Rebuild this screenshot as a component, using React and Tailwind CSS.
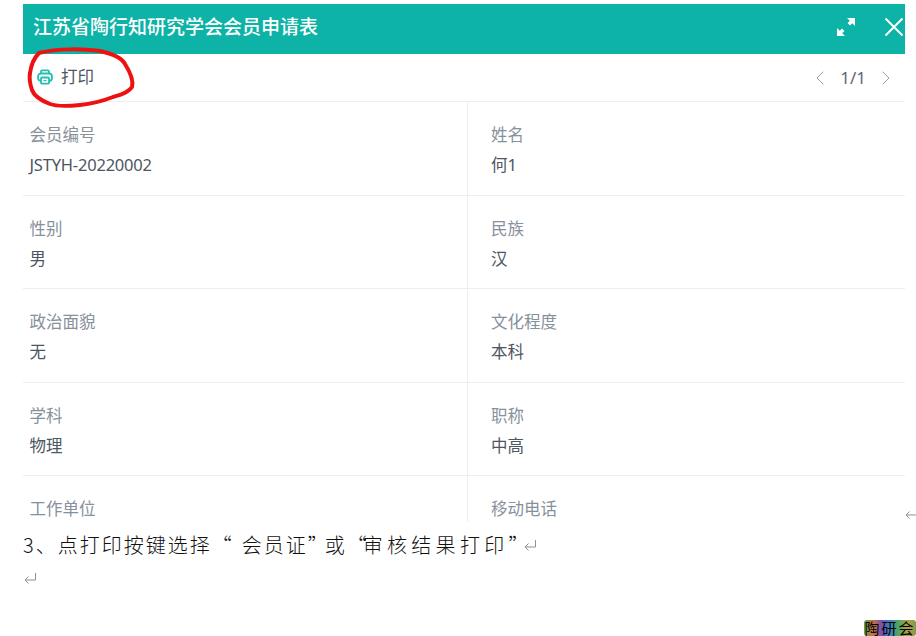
import { ChevronLeft, ChevronRight } from "lucide-react";

const font = { cjk: "font-['Noto_Sans','Noto_Sans_CJK_SC',sans-serif]" };

const rows = [
  [["会员编号", "JSTYH-20220002"], ["姓名", "何1"]],
  [["性别", "男"], ["民族", "汉"]],
  [["政治面貌", "无"], ["文化程度", "本科"]],
  [["学科", "物理"], ["职称", "中高"]],
];

const Field = ({ label, value, right }) => (
  <div className={right ? "flex-1 pl-[23px] pt-[21px]" : "w-[445px] border-r border-[#eceef0] pl-[6.500px] pt-[21px]"}>
    <div className="text-[16.5px] leading-[24px] text-[#87919c]">{label}</div>
    {value && (
      <div className={`mt-[6px] text-[16.5px] leading-[24px] text-[#4d5661] ${value.startsWith("JSTYH") ? "tracking-[-0.2px]" : ""}`}>
        {value}
      </div>
    )}
  </div>
);

const ReturnMark = ({ className }) => (
  <svg viewBox="0 0 14 14" className={className} fill="none" stroke="#8f8f8f" strokeWidth="1">
    <path d="M12.5 2v7H2M5.5 5.5 2 9l3.5 3.500" />
  </svg>
);

const App = () => {
  return (
    <div className={`relative h-[636px] w-[916px] overflow-hidden bg-white ${font.cjk}`}>
      <div className="ml-[23px] w-[882px] pt-[4px]">
        <div className="flex h-[50px] items-center justify-between bg-[#0db3a6] pb-[5px] pl-[10px] pr-[1px] text-white">
          <span className="text-[19px] font-medium leading-[26px]">江苏省陶行知研究学会会员申请表</span>
          <div className="flex items-center">
            <svg viewBox="0 0 20 20" className="h-[20px] w-[20px]" fill="white">
              <path d="M11 1h8v8l-2.800-2.800-2.200 2.200-2.400-2.400 2.200-2.200zM9 19H1v-8l2.800 2.800 2.200-2.200 2.400 2.400-2.200 2.200z" />
            </svg>
            <svg viewBox="0 0 20 20" className="ml-[28px] h-[20px] w-[20px]" fill="none" stroke="white" strokeWidth="2">
              <path d="M1.500 1.500l17 17M18.500 1.500l-17 17" />
            </svg>
          </div>
        </div>
        <div className="flex h-[48px] items-center justify-between border-b border-[#eceef0]">
          <div className="flex items-center pl-[14px]">
            <svg viewBox="0 0 16 16" className="mb-[1px] h-[16px] w-[16px]" fill="none" stroke="#22c0b2" strokeWidth="1.800">
              <path d="M4 5V2.500a1.200 1.200 0 0 1 1.200-1.200h5.600A1.200 1.200 0 0 1 12 2.500V5" />
              <rect x="1" y="4.500" width="14" height="7.500" rx="3" />
              <rect x="4" y="8.500" width="8" height="6.200" rx="1" fill="white" />
              <path d="M6.500 11.500h3" strokeWidth="1.200" />
            </svg>
            <span className="ml-[8px] text-[16.5px] text-[#4d5661]">打印</span>
          </div>
          <div className="flex items-center pr-[7px] text-[#5f6873]">
            <ChevronLeft className="h-[24px] w-[24px] text-[#9aa1a9]" strokeWidth={1} />
            <span className="ml-[8px] mr-[8px] text-[17px]">1/1</span>
            <ChevronRight className="h-[24px] w-[24px] text-[#9aa1a9]" strokeWidth={1} />
          </div>
        </div>
        {rows.map((row) => (
          <div key={row[0][0]} className="flex h-[93.500px] border-b border-[#eceef0]">
            <Field label={row[0][0]} value={row[0][1]} />
            <Field label={row[1][0]} value={row[1][1]} right />
          </div>
        ))}
        <div className="flex h-[46px] overflow-hidden">
          <Field label="工作单位" />
          <Field label="移动电话" right />
        </div>
      </div>
      <div className="mt-[8px] flex items-center pl-[23px] font-['Noto_Sans_CJK_SC',sans-serif] text-[20px] font-light leading-[30px] tracking-[2px] text-[#111]">
        <span>3、点打印按键选择</span>
        <span className="tracking-[10px]">“</span>
        <span>会员证</span>
        <span className="tracking-[-3px]">”</span>
        <span>或</span>
        <span className="tracking-[-4px]">“</span>
        <span className="tracking-[4.300px]">审核结果打印</span>
        <span className="tracking-[-6px]">”</span>
        <ReturnMark className="h-[14px] w-[14px]" />
      </div>
      <div className="mt-[11px] pl-[23px]">
        <ReturnMark className="h-[14px] w-[14px]" />
      </div>

      {/* stuff sitting on top of the screenshot */}
      <ReturnMark className="absolute left-[904px] top-[506px] h-[14px] w-[14px]" />
      <svg viewBox="0 0 916 636" className="pointer-events-none absolute left-0 top-0 h-[636px] w-[916px]" fill="none">
        <path
          d="M39 53C58 48 85 49 100 51C113 54 122 58 125 64C130 72 134 80 132 87C128 93 120 95 113 97C100 102 90 104 80 105C70 106 58 107 50 104C40 100 34 96 32 90C30 84 29 78 30 73C31 66 34 58 39 53"
          stroke="#ee1111"
          strokeWidth="4"
          strokeLinecap="round"
        />
      </svg>
      <div className="absolute left-[864px] top-[620px] flex h-[16px] w-[52px] items-center justify-center rounded-[3px] bg-[linear-gradient(90deg,#5fa05a,#c9743a,#7a4fb0,#3a7fc0,#4fa85a,#b5a04a,#7f9a4a)] text-[15px] leading-none tracking-[2px] text-black">
        陶研会
      </div>
    </div>
  );
};

export default App;
